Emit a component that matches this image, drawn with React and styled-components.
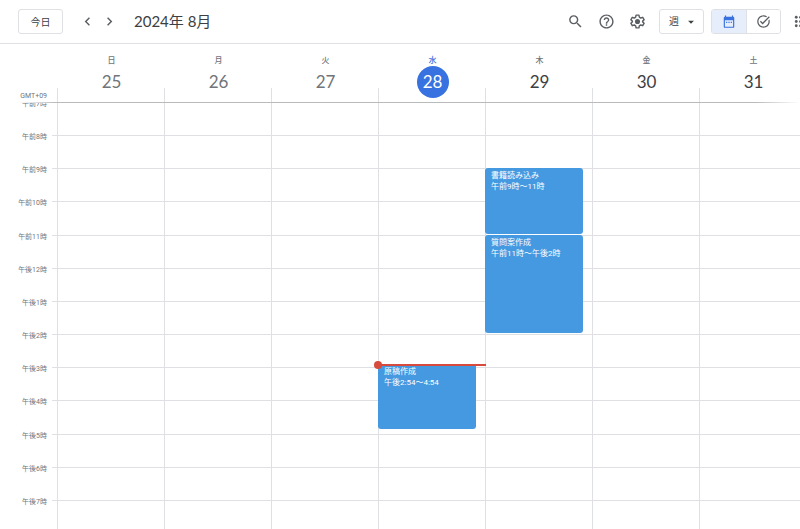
import React from 'react'
import styled, { createGlobalStyle, ThemeProvider } from 'styled-components'
import {
	MdArrowDropDown,
	MdChevronLeft,
	MdChevronRight,
	MdHelpOutline,
	MdSearch,
	MdTaskAlt,
} from 'react-icons/md'

const theme = {
	primary: '#3871e0',
	primaryLight: '#e6edfb',
	event: '#4599e0',
	now: '#d84a3c',
	text: '#3c4043',
	muted: '#70757a',
	icon: '#5a5e63',
	line: '#dfe0e3',
	display: `Lato, 'Noto Sans CJK JP', sans-serif`,
}

const FIRST_HOUR = 7
const HOURS = Array.from({ length: 13 }, (_, i) => FIRST_HOUR + i)

const DAYS = [
	{ name: '日', date: 25, past: true },
	{ name: '月', date: 26, past: true },
	{ name: '火', date: 27, past: true },
	{
		name: '水',
		date: 28,
		today: true,
		now: 14.94,
		events: [{ title: '原稿作成', time: '午後2:54〜4:54', start: 14.9, end: 16.9 }],
	},
	{
		name: '木',
		date: 29,
		events: [
			{ title: '書籍読み込み', time: '午前9時〜11時', start: 9, end: 11 },
			{ title: '質問案作成', time: '午前11時〜午後2時', start: 11, end: 14 },
		],
	},
	{ name: '金', date: 30 },
	{ name: '土', date: 31 },
]

const hourLabel = hour => (hour <= 11 ? `午前${hour}時` : `午後${hour === 12 ? 12 : hour - 12}時`)
const percent = hours => `${(hours / HOURS.length) * 100}%`

const GlobalStyle = createGlobalStyle`
	* { box-sizing: border-box; }
	body {
		margin: 0;
		overflow: hidden;
		background: #fff;
		font-family: Roboto, 'Noto Sans CJK JP', sans-serif;
	}
	button, select { font-family: inherit; }
`

/* the calendar runs slightly past the right edge of the window */
const Page = styled.div`
	display: flex;
	flex-direction: column;
	height: 100vh;
	margin-right: -6px;
`

const Toolbar = styled.header`
	display: flex;
	align-items: center;
	justify-content: space-between;
	height: 44px;
	padding-left: 18px;
	border-bottom: 1px solid ${({ theme }) => theme.line};
`

const Group = styled.div`
	display: flex;
	align-items: center;
	gap: ${({ $gap }) => $gap || 0}px;
`

const TodayButton = styled.button`
	width: 45px;
	height: 25px;
	margin-right: 13px;
	padding: 0;
	border: 1px solid ${({ theme }) => theme.line};
	border-radius: 3px;
	background: #fff;
	color: ${({ theme }) => theme.text};
	font-size: 10px;
`

const IconButton = styled.button`
	display: flex;
	align-items: center;
	justify-content: center;
	width: ${({ $width }) => $width || 22}px;
	height: 24px;
	padding: 0;
	border: 0;
	background: none;
	color: ${({ theme }) => theme.icon};
	font-size: 17px;
	svg { flex-shrink: 0; }
`

const Title = styled.h1`
	margin: 0 0 2px 14px;
	color: ${({ theme }) => theme.text};
	font-family: ${({ theme }) => theme.display};
	font-size: 15px;
	font-weight: 400;
	line-height: 20px;
`

const SelectBox = styled.label`
	display: flex;
	align-items: center;
	position: relative;
	margin: 0 7px 0 11px;
	svg {
		position: absolute;
		right: 6px;
		color: ${({ theme }) => theme.text};
		font-size: 14px;
		pointer-events: none;
	}
`

const Select = styled.select`
	appearance: none;
	width: 45px;
	height: 25px;
	padding: 0 0 0 9px;
	border: 1px solid ${({ theme }) => theme.line};
	border-radius: 3px;
	background: #fff;
	color: ${({ theme }) => theme.text};
	font-size: 10px;
`

const Toggle = styled.div`
	display: flex;
	height: 25px;
	margin-right: 13px;
	border: 1px solid ${({ theme }) => theme.line};
	border-radius: 3px;
	overflow: hidden;
`

const ToggleButton = styled.button`
	display: flex;
	align-items: center;
	justify-content: center;
	width: 34px;
	padding: 0;
	border: 0;
	background: ${({ $active, theme }) => ($active ? theme.primaryLight : '#fff')};
	color: ${({ $active, theme }) => ($active ? theme.primary : theme.icon)};
	font-size: 15px;
	& + & {
		border-left: 1px solid ${({ theme }) => theme.line};
	}
`

const WeekHeader = styled.div`
	display: grid;
	grid-template-columns: 57px repeat(7, 1fr);
	height: 58px;
	flex-shrink: 0;
`

const Timezone = styled.div`
	align-self: end;
	padding-right: 10px;
	color: ${({ theme }) => theme.muted};
	font-size: 7px;
	line-height: 12px;
	text-align: right;
`

const DayHeading = styled.div`
	display: flex;
	flex-direction: column;
	align-items: center;
	padding: 12px 0 0 2px;
	background: linear-gradient(${({ theme }) => theme.line}, ${({ theme }) => theme.line}) left bottom / 1px 14px no-repeat;
`

const Weekday = styled.div`
	color: ${({ $today, theme }) => ($today ? theme.primary : theme.muted)};
	font-size: 8px;
	font-weight: 500;
	line-height: 10px;
`

const DateNumber = styled.div`
	width: 32px;
	height: 32px;
	border-radius: 50%;
	background: ${({ $today, theme }) => ($today ? theme.primary : 'transparent')};
	color: ${({ $today, $past, theme }) => ($today ? '#fff' : $past ? theme.muted : theme.text)};
	font-family: ${({ theme }) => theme.display};
	font-size: 17px;
	line-height: 32px;
	text-align: center;
`

const HeaderRule = styled.div`
	height: 1px;
	flex-shrink: 0;
	background: linear-gradient(to right, transparent 18px, #b8babc 56px, #b8babc calc(100% - 50px), transparent calc(100% - 6px));
`

const Scroller = styled.main`
	flex: 1;
	min-height: 0;
	overflow: hidden;
`

const WeekGrid = styled.div`
	display: grid;
	grid-template-columns: 52px 5px repeat(7, 1fr);
	height: 431px;
	margin-top: -1px;
`

const HourColumn = styled.div`
	display: grid;
	grid-template-rows: repeat(${HOURS.length}, 1fr);
`

const HourLabel = styled.div`
	padding-right: 5px;
	margin-top: -5px;
	color: ${({ theme }) => theme.muted};
	font-size: 7px;
	line-height: 14px;
	text-align: right;
	white-space: nowrap;
`

const HourLine = styled.div`
	border-top: 1px solid ${({ theme }) => theme.line};
`

const DayColumn = styled.div`
	display: grid;
	grid-template-rows: repeat(${HOURS.length}, 1fr);
	position: relative;
	border-left: 1px solid ${({ theme }) => theme.line};
`

const Event = styled.article`
	position: absolute;
	left: -1px;
	right: 9px;
	padding: 2px 6px;
	border-radius: 3px;
	background: ${({ theme }) => theme.event};
	color: #fff;
	font-size: 8px;
	line-height: 11px;
	overflow: hidden;
	white-space: nowrap;
`

const NowLine = styled.div`
	position: absolute;
	z-index: 1;
	left: -1px;
	right: -1px;
	height: 2px;
	margin-top: -1px;
	background: ${({ theme }) => theme.now};
	&::before {
		content: '';
		position: absolute;
		top: -3px;
		left: -4px;
		width: 8px;
		height: 8px;
		border-radius: 50%;
		background: ${({ theme }) => theme.now};
	}
`

const GearIcon = () => (
	<svg width="17" height="17" viewBox="0 0 24 24" fill="none" stroke="currentColor">
		<path
			strokeWidth="2"
			strokeLinejoin="round"
			d="M10 3h4l.6 2.9 2 1.2 2.8-1 2 3.5-2.2 1.9v1l2.2 1.9-2 3.5-2.8-1-2 1.2L14 21h-4l-.6-2.9-2-1.2-2.8 1-2-3.5 2.2-1.9v-1L2.6 9.6l2-3.5 2.8 1 2-1.2z"
		/>
		<circle cx="12" cy="12" r="3.6" fill="currentColor" stroke="none" />
	</svg>
)

const CalendarIcon = () => (
	<svg width="14" height="14" viewBox="0 0 24 24" fill="currentColor">
		<path
			fillRule="evenodd"
			d="M5 1h2v2h10V1h2v2a2 2 0 0 1 2 2v15a2 2 0 0 1-2 2H5a2 2 0 0 1-2-2V5a2 2 0 0 1 2-2zM5 9v11h14V9z"
		/>
		<path d="M7 11.5h2v2H7zM11 11.5h2v2h-2zM15 11.5h2v2h-2z" />
	</svg>
)

const AppsIcon = () => (
	<svg width="17" height="17" viewBox="0 0 24 24" fill="currentColor">
		{[6, 12, 18].map(y => [6, 12, 18].map(x => <circle key={`${x}-${y}`} cx={x} cy={y} r="2" />))}
	</svg>
)

const App = () => (
	<ThemeProvider theme={theme}>
		<GlobalStyle />
		<Page>
			<Toolbar>
				<Group>
					<TodayButton>今日</TodayButton>
					<IconButton aria-label="前の週"><MdChevronLeft /></IconButton>
					<IconButton aria-label="次の週"><MdChevronRight /></IconButton>
					<Title>2024年 8月</Title>
				</Group>
				<Group>
					<Group $gap={9}>
						<IconButton aria-label="検索"><MdSearch /></IconButton>
						<IconButton aria-label="ヘルプ"><MdHelpOutline /></IconButton>
						<IconButton aria-label="設定"><GearIcon /></IconButton>
					</Group>
					<SelectBox>
						<Select aria-label="表示" defaultValue="week">
							<option value="week">週</option>
						</Select>
						<MdArrowDropDown />
					</SelectBox>
					<Toggle>
						<ToggleButton $active aria-pressed="true" aria-label="カレンダー"><CalendarIcon /></ToggleButton>
						<ToggleButton aria-pressed="false" aria-label="ToDo"><MdTaskAlt /></ToggleButton>
					</Toggle>
					<IconButton $width={12} aria-label="アプリ"><AppsIcon /></IconButton>
				</Group>
			</Toolbar>
			<WeekHeader>
				<Timezone>GMT+09</Timezone>
				{DAYS.map(({ name, date, today, past }) => (
					<DayHeading key={date}>
						<Weekday $today={today}>{name}</Weekday>
						<DateNumber $today={today} $past={past}>{date}</DateNumber>
					</DayHeading>
				))}
			</WeekHeader>
			<HeaderRule />
			<Scroller>
				<WeekGrid>
					<HourColumn>
						{HOURS.map(hour => <HourLabel key={hour}>{hourLabel(hour)}</HourLabel>)}
					</HourColumn>
					<HourColumn>
						{HOURS.map(hour => <HourLine key={hour} />)}
					</HourColumn>
					{DAYS.map(({ date, now, events = [] }) => (
						<DayColumn key={date}>
							{HOURS.map(hour => <HourLine key={hour} />)}
							{events.map(({ title, time, start, end }) => (
								<Event
									key={title}
									style={{
										top: percent(start - FIRST_HOUR),
										height: `calc(${percent(end - start)} - 1px)`,
									}}
								>
									<div>{title}</div>
									<div>{time}</div>
								</Event>
							))}
							{now && <NowLine style={{ top: percent(now - FIRST_HOUR) }} />}
						</DayColumn>
					))}
				</WeekGrid>
			</Scroller>
		</Page>
	</ThemeProvider>
)

export default App
